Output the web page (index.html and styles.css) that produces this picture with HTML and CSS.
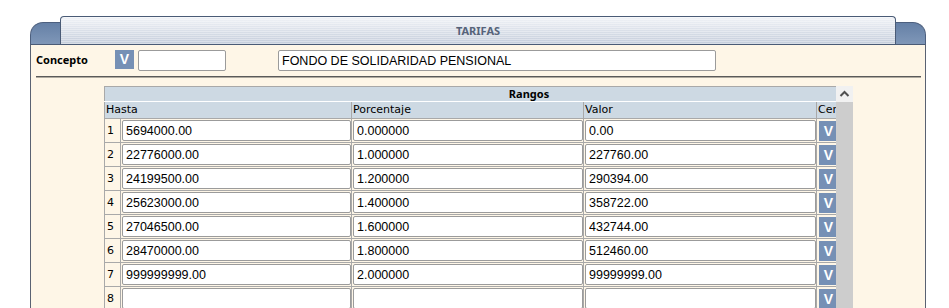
FILE: index.html
```
<!DOCTYPE html>
<html lang="es">
<head>
    <meta charset="UTF-8">
    <title>Tarifas</title>
    <link rel="stylesheet" href="styles.css">
</head>
<body>
    <div class="panel">
        <div class="panel-head">
            <div class="tab">TARIFAS</div>
        </div>

        <div class="panel-body">
            <div class="field-row">
                <label class="field-label" for="codigo">Concepto</label>
                <button class="btn-v">V</button>
                <input type="text" id="codigo" class="txt txt-code">
                <input type="text" class="txt txt-name" value="FONDO DE SOLIDARIDAD PENSIONAL">
            </div>

            <div class="sep"></div>

            <div class="grid-box">
                <div class="grid-view">
                    <table class="grid">
                        <colgroup>
                            <col class="c-num">
                            <col class="c-hasta">
                            <col class="c-porc">
                            <col class="c-valor">
                            <col class="c-cen">
                        </colgroup>
                        <tr class="grid-title"><th colspan="5">Rangos</th></tr>
                        <tr class="grid-head">
                            <th colspan="2">Hasta</th>
                            <th>Porcentaje</th>
                            <th>Valor</th>
                            <th>Centro de Costo</th>
                        </tr>
                        <tr>
                            <td class="num">1</td>
                            <td><input type="text" class="txt" value="5694000.00"></td>
                            <td><input type="text" class="txt" value="0.000000"></td>
                            <td><input type="text" class="txt" value="0.00"></td>
                            <td><button class="btn-v">V</button></td>
                        </tr>
                        <tr>
                            <td class="num">2</td>
                            <td><input type="text" class="txt" value="22776000.00"></td>
                            <td><input type="text" class="txt" value="1.000000"></td>
                            <td><input type="text" class="txt" value="227760.00"></td>
                            <td><button class="btn-v">V</button></td>
                        </tr>
                        <tr>
                            <td class="num">3</td>
                            <td><input type="text" class="txt" value="24199500.00"></td>
                            <td><input type="text" class="txt" value="1.200000"></td>
                            <td><input type="text" class="txt" value="290394.00"></td>
                            <td><button class="btn-v">V</button></td>
                        </tr>
                        <tr>
                            <td class="num">4</td>
                            <td><input type="text" class="txt" value="25623000.00"></td>
                            <td><input type="text" class="txt" value="1.400000"></td>
                            <td><input type="text" class="txt" value="358722.00"></td>
                            <td><button class="btn-v">V</button></td>
                        </tr>
                        <tr>
                            <td class="num">5</td>
                            <td><input type="text" class="txt" value="27046500.00"></td>
                            <td><input type="text" class="txt" value="1.600000"></td>
                            <td><input type="text" class="txt" value="432744.00"></td>
                            <td><button class="btn-v">V</button></td>
                        </tr>
                        <tr>
                            <td class="num">6</td>
                            <td><input type="text" class="txt" value="28470000.00"></td>
                            <td><input type="text" class="txt" value="1.800000"></td>
                            <td><input type="text" class="txt" value="512460.00"></td>
                            <td><button class="btn-v">V</button></td>
                        </tr>
                        <tr>
                            <td class="num">7</td>
                            <td><input type="text" class="txt" value="999999999.00"></td>
                            <td><input type="text" class="txt" value="2.000000"></td>
                            <td><input type="text" class="txt" value="99999999.00"></td>
                            <td><button class="btn-v">V</button></td>
                        </tr>
                        <tr>
                            <td class="num">8</td>
                            <td><input type="text" class="txt" value=""></td>
                            <td><input type="text" class="txt" value=""></td>
                            <td><input type="text" class="txt" value=""></td>
                            <td><button class="btn-v">V</button></td>
                        </tr>
                    </table>
                </div>
                <div class="vscroll">
                    <div class="vscroll-up">
                        <svg width="17" height="16" viewBox="0 0 17 16">
                            <polyline points="4.5,10 8.5,6 12.5,10" fill="none" stroke="#505050" stroke-width="2"/>
                        </svg>
                    </div>
                    <div class="vscroll-thumb"></div>
                </div>
            </div>
        </div>
    </div>
</body>
</html>
```
FILE: styles.css
```
body {
    margin: 0;
    background-color: #ffffff;
    font-family: "DejaVu Sans", sans-serif;
    font-size: 11px;
    color: #000000;
    overflow: hidden;
}
.panel {
    width: 896px;
    margin: 16px 0 0 30px;
}
.panel-head {
    position: relative;
    height: 28px;
    padding: 0 30px;
    display: flex;
}
.panel-head::before {
    content: "";
    position: absolute;
    left: 0;
    right: 0;
    top: 6px;
    bottom: 0;
    background: linear-gradient(#6580a6, #7f97b8);
    border: 1px solid #4c5f7e;
    border-bottom: none;
    border-radius: 13px 13px 0 0;
}
.tab {
    position: relative;
    flex: 1;
    border: 1px solid #4a5b76;
    border-bottom: none;
    border-radius: 4px 4px 0 0;
    background:
        repeating-linear-gradient(to bottom, rgba(255, 255, 255, 0.35) 0 1px, transparent 1px 2px),
        linear-gradient(#f1f3f7, #c4cddb);
    text-align: center;
    line-height: 27px;
    font-family: "Noto Sans", sans-serif;
    font-weight: bold;
    font-size: 11px;
    color: #56637a;
}
.panel-body {
    background-color: #fef6e7;
    border-top: 1px solid #4a5b76;
    border-left: 1px solid #5a6272;
    border-right: 1px solid #5a6272;
    height: 258px;
    padding-top: 5px;
}
.field-row {
    display: flex;
    align-items: flex-start;
    padding-left: 5px;
}
.field-label {
    width: 79px;
    font-family: "Noto Sans", sans-serif;
    font-weight: bold;
    font-size: 11px;
    line-height: 19px;
}
.btn-v {
    width: 19px;
    height: 19px;
    padding: 0;
    border: none;
    background-color: #7690b5;
    color: #ffffff;
    font-family: "Liberation Sans", sans-serif;
    font-weight: bold;
    font-size: 14px;
    line-height: 19px;
    cursor: pointer;
}
.txt {
    box-sizing: border-box;
    height: 21px;
    padding: 0 3px;
    border: 1px solid #9b9b9b;
    border-radius: 2px;
    background-color: #ffffff;
    font-family: "Liberation Sans", sans-serif;
    font-size: 12.5px;
    color: #000000;
}
.txt-code {
    width: 88px;
    margin-left: 4px;
}
.txt-name {
    width: 438px;
    margin-left: 52px;
}
.sep {
    margin: 5px 4px 0 5px;
    height: 1px;
    background-color: #5a5a5a;
    border-bottom: 1px solid #b0aba0;
}
.grid-box {
    display: flex;
    margin: 8px 0 0 73px;
}
.grid-view {
    width: 732px;
    overflow: hidden;
}
.grid {
    width: 848px;
    table-layout: fixed;
    border-collapse: collapse;
}
.c-num { width: 16px; }
.c-hasta { width: 231px; }
.c-porc { width: 232px; }
.c-valor { width: 233px; }
.c-cen { width: 136px; }
.grid th {
    background-color: #cdd9e3;
    border: 1px solid #a9a9a9;
    font-weight: normal;
    text-align: left;
    padding: 0 0 0 1px;
    height: 14px;
    line-height: 14px;
    white-space: nowrap;
    overflow: hidden;
}
.grid-title th {
    text-align: center;
    font-family: "Noto Sans", sans-serif;
    font-weight: bold;
    border-bottom-color: #ffffff;
}
.grid-head th {
    border-top-color: #ffffff;
    height: 16px;
}
.grid td {
    border: 1px solid #a9a9a9;
    height: 23px;
    padding: 0 0 0 1px;
    vertical-align: middle;
}
.grid td.num {
    padding-left: 2px;
}
.grid td .txt {
    display: block;
    width: 100%;
}
.grid td .btn-v {
    display: block;
    height: 20px;
    line-height: 20px;
    margin-left: 1px;
}
.vscroll {
    width: 17px;
    display: flex;
    flex-direction: column;
}
.vscroll-up {
    height: 16px;
    background-color: #f1f1f1;
}
.vscroll-up svg {
    display: block;
}
.vscroll-thumb {
    flex: 1;
    background-color: #cdcdcd;
}
```
